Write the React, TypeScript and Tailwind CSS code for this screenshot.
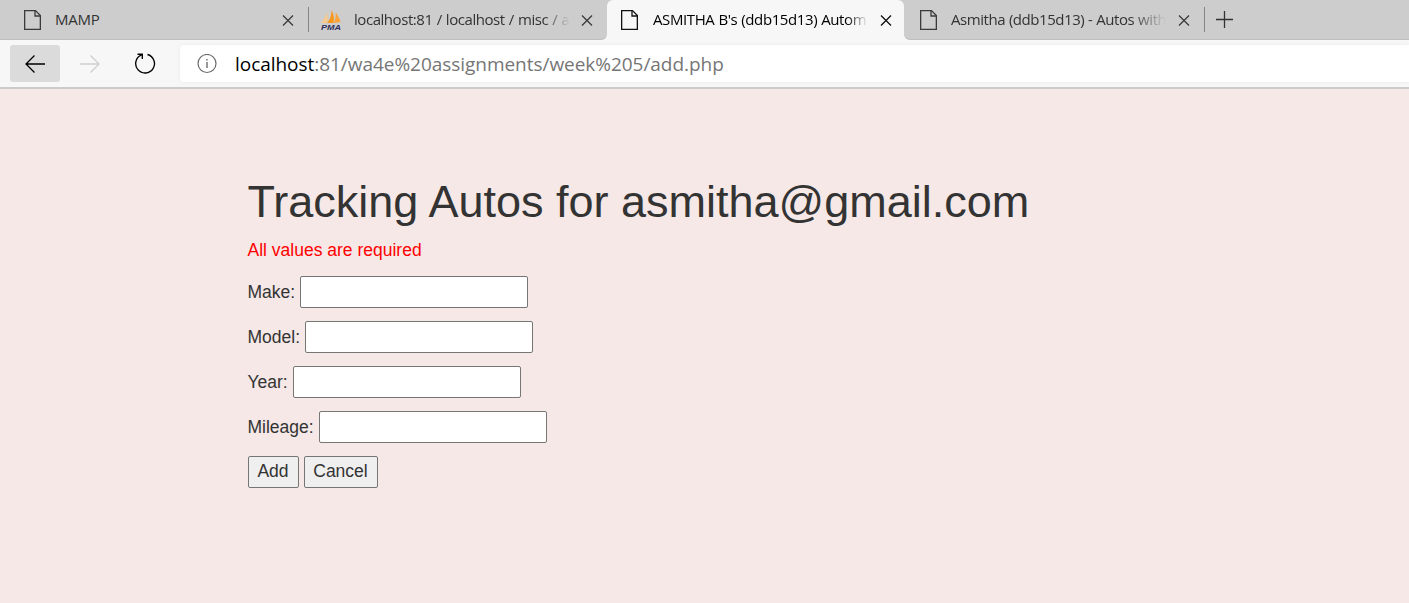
import React from "react";

function PageIcon({ active = false }: { active?: boolean }) {
  return (
    <svg className="shrink-0" width="17" height="20" viewBox="0 0 17 20" fill="none" stroke={active ? "#111" : "#3a3a3a"} strokeWidth="1.3">
      <path d="M.65 .65H11.500L16.350 5.500V19.350H.65Z" />
      <path d="M11 .65V6H16.350" />
    </svg>
  );
}

function PmaIcon() {
  return (
    <svg className="shrink-0" width="20" height="20" viewBox="0 0 20 20">
      <path d="M0 13C3 10 5 6 5.500 2C7 6 7 10 6 13Z" fill="#f9c98b" />
      <path d="M6 13C9.500 9 10.500 5 10.500 0C13 4 13.500 9 12.500 13Z" fill="#f8971d" />
      <path d="M12.500 13C14.500 10 15 7 14.500 2C17 6 19 9 19.500 12Z" fill="#fba43a" />
      <text x="0" y="19.500" fontFamily="Liberation Sans, sans-serif" fontSize="8" fontWeight="bold" fontStyle="italic" textLength="20" lengthAdjust="spacingAndGlyphs" fill="#30305c">PMA</text>
    </svg>
  );
}

function CloseIcon({ active = false }: { active?: boolean }) {
  return (
    <svg className="shrink-0" width="12" height="12" viewBox="0 0 12 12" stroke={active ? "#111" : "#3a3a3a"} strokeWidth="1.3">
      <path d="M1 1.500L11 11.500M11 1.500L1 11.500" />
    </svg>
  );
}

type TabProps = { title: string; active?: boolean; pma?: boolean; box: string; text: string };

function Tab({ title, active, pma, box, text }: TabProps) {
  return (
    <div className={`flex h-10 shrink-0 items-center ${box}`}>
      {pma ? <PmaIcon /> : <PageIcon active={active} />}
      <span className={`mb-[2px] overflow-hidden whitespace-nowrap text-[15px] leading-5 ${active ? "text-black" : "text-[#333]"} ${text}`}>{title}</span>
      <CloseIcon active={active} />
    </div>
  );
}

function Field({ label }: { label: string }) {
  return (
    <label className="mb-[13px] flex h-8 items-center gap-[4.9px]">
      <span>{label}</span>
      <input className="h-8 w-[228px] rounded-[2px] border border-[#767676] bg-white px-1 outline-none" />
    </label>
  );
}

export default function App() {
  return (
    <div className="h-[603px] w-[1409px] overflow-hidden bg-[#f5e8e6] font-['Liberation_Sans',Arial,sans-serif] text-[17.5px] text-[#333]">
      <header className="bg-[#f7f7f7] font-['Open_Sans','Noto_Sans',sans-serif]">
        <div className="flex h-10 bg-[#f7f7f7]">
          <div className="flex w-[607px] items-center rounded-br-md border-b border-[#bebebe] bg-[#cdcdcd]">
            <Tab title="MAMP" box="w-[308px] pl-6" text="ml-[14px] w-[227px] tracking-[-0.2px]" />
            <div className="h-[25px] w-px bg-[#858585]" />
            <Tab title="localhost:81 / localhost / misc / a" pma box="w-[298px] pl-[12px]" text="ml-[13px] mr-[11px] w-[216px] [mask-image:linear-gradient(to_right,#000_88%,transparent)] tracking-[-0.45px] [word-spacing:0.7px]" />
          </div>
          <div className="w-[297px] bg-[#cdcdcd]">
            <Tab title="ASMITHA B's (ddb15d13) Autom" active box="w-[297px] rounded-t-md bg-[#f7f7f7] pl-[14px]" text="ml-[15px] mr-[12px] w-[215px] [mask-image:linear-gradient(to_right,#000_90%,transparent)] tracking-[-0.4px] [word-spacing:0.5px]" />
          </div>
          <div className="flex flex-1 items-center rounded-bl-md border-b border-[#bebebe] bg-[#cdcdcd]">
            <Tab title="Asmitha (ddb15d13) - Autos with" box="w-[300px] pl-[16px]" text="ml-[14px] mr-[12px] w-[215px] [mask-image:linear-gradient(to_right,#000_84%,transparent)] tracking-[-0.45px] [word-spacing:0.4px]" />
            <div className="h-[25px] w-px bg-[#858585]" />
            <svg className="ml-[11px]" width="17" height="17" viewBox="0 0 17 17" stroke="#333" strokeWidth="1.3">
              <path d="M8.500 0V17M0 8.500H17" />
            </svg>
          </div>
        </div>
        <div className="flex h-[47px] items-start pl-[10px] pt-[5px]">
          <button className="flex h-[37px] w-[50px] items-center justify-center rounded-[3px] bg-[#dbdbdb]" aria-label="Back">
            <svg width="20" height="18" viewBox="0 0 20 18" fill="none" stroke="#000" strokeWidth="1.3"><path d="M20 9H1M9.500 .5L1 9L9.500 17.500" /></svg>
          </button>
          <button className="ml-5 flex h-[37px] w-5 items-center" aria-label="Forward">
            <svg width="20" height="18" viewBox="0 0 20 18" fill="none" stroke="#cfcfcf" strokeWidth="1.3"><path d="M0 9H19M10.500 .5L19 9L10.500 17.500" /></svg>
          </button>
          <button className="ml-[34px] flex h-[37px] w-[22px] items-center" aria-label="Refresh">
            <svg width="22" height="22" viewBox="0 0 22 22" fill="none" stroke="#000" strokeWidth="1.35"><path d="M13.500 1.500A9.400 9.400 0 1 1 7.500 1.900M3.500 1.200H8.300V6" /></svg>
          </button>
          <div className="ml-6 flex h-[37px] flex-1 items-center rounded-l-[4px] bg-white pl-[17px] shadow-[0_0_4px_rgba(0,0,0,0.06)]">
            <svg width="20" height="20" viewBox="0 0 20 20" fill="none" stroke="#6b6b6b" strokeWidth="1.2"><circle cx="10" cy="9.500" r="9" /><path d="M10 8V14M10 5V6.500" strokeWidth="1.4" /></svg>
            <span className="ml-[18px] whitespace-nowrap text-[19px] leading-6 tracking-[-0.04px] text-[#767676]"><span className="text-black">localhost</span>:81/wa4e%20assignments/week%205/add.php</span>
          </div>
        </div>
        <div className="h-[2px] bg-[#cbcbcb]" />
      </header>
      <main className="pl-[247.5px] pt-[88px]">
        <h1 className="text-[45px] font-normal leading-[50px]">Tracking Autos for asmitha@gmail.com</h1>
        <p className="mt-[11px] leading-[25px] text-[red]">All values are required</p>
        <form className="mt-[13px]">
          <Field label="Make:" />
          <Field label="Model:" />
          <Field label="Year:" />
          <Field label="Mileage:" />
          <div className="flex gap-[5px]">
            <button type="button" className="h-8 w-[51px] rounded-[2px] border border-[#767676] bg-[#efefef] pb-0.5">Add</button>
            <button type="button" className="h-8 w-[74px] rounded-[2px] border border-[#767676] bg-[#efefef] pb-0.5">Cancel</button>
          </div>
        </form>
      </main>
    </div>
  );
}
